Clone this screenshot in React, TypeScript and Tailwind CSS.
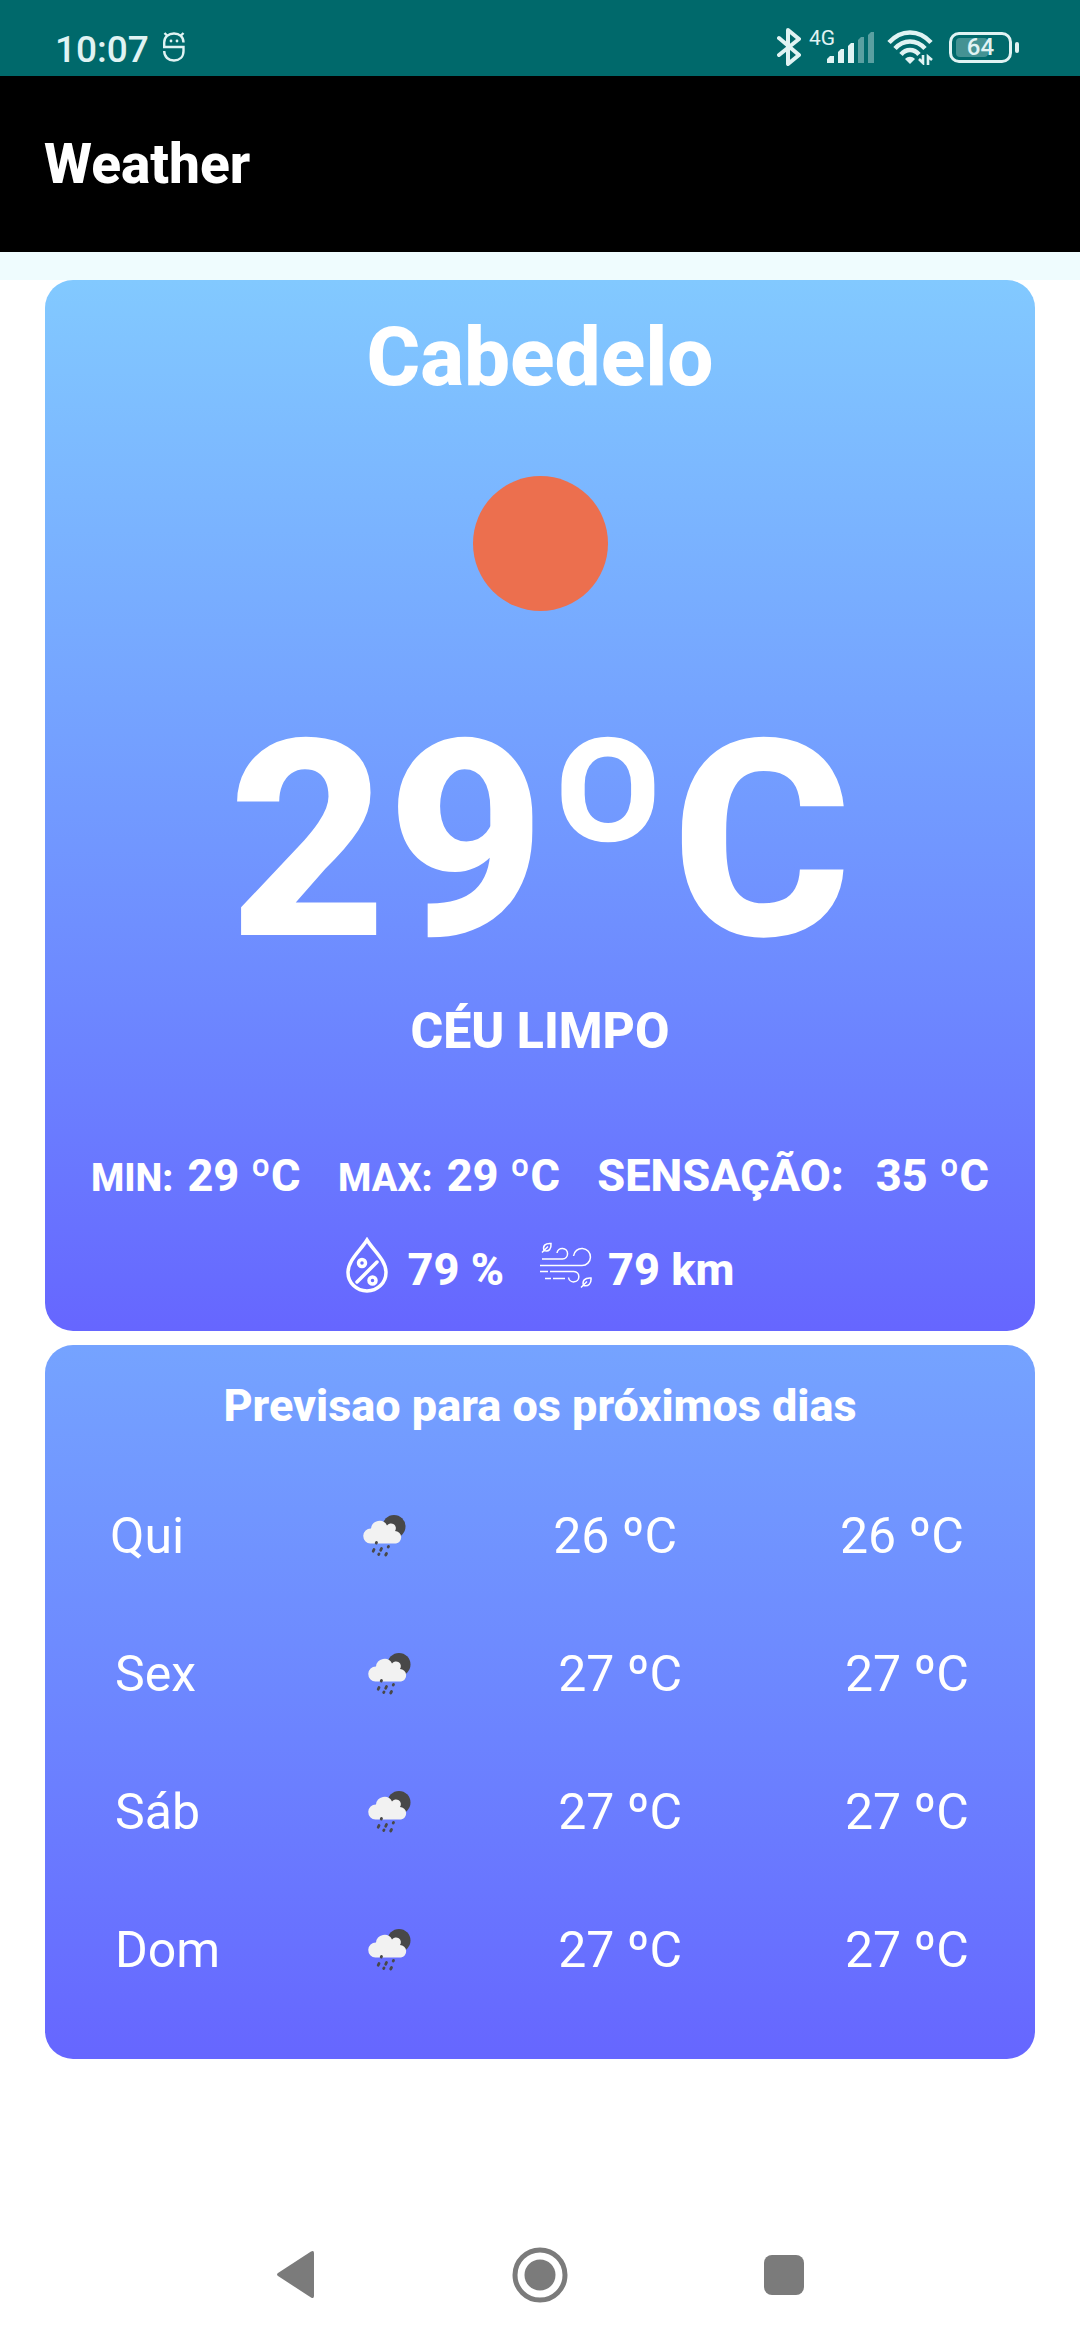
import React from "react";

const NAV = "#7b7b7b";
const STATUS = "#e0f3f3";

function MascotIcon() {
  return (
    <svg viewBox="0 0 22 30" className="h-[30px] w-[22px]" fill="none" stroke={STATUS} strokeWidth="2.400" aria-hidden="true">
      <path d="M4.500 4 1.500 1M17.500 4 20.500 1" />
      <path d="M20.500 10.500C20.500 5 16.500 1.500 11 1.500S1.200 5 1.200 10.500v4.500H20.500V19c0 6-4 9.500-9.500 9.500S1.200 25 1.200 19" />
      <circle cx="8" cy="9" r="1.400" fill={STATUS} stroke="none" />
      <circle cx="14" cy="9" r="1.400" fill={STATUS} stroke="none" />
    </svg>
  );
}

function BluetoothIcon() {
  return (
    <svg viewBox="0 0 24 38" className="h-[38px] w-6" fill="none" stroke={STATUS} strokeWidth="4" strokeLinejoin="round" strokeLinecap="round" aria-hidden="true">
      <path d="M2 10 22 27 11 36V2l11 9L2 27" />
    </svg>
  );
}

function SignalIcon() {
  return (
    <svg viewBox="0 0 48 31" className="h-[31px] w-12" fill={STATUS} aria-hidden="true">
      <path d="M0 31v-4l3-3h4v7z" />
      <path d="M11 31V20l3-3h3v14z" />
      <path d="M21 31V14l3-3h3v20z" />
      <path d="M31 31V8l3-3h3v26z" opacity=".4" />
      <path d="M41 31V3l3-3h3v31z" opacity=".4" />
    </svg>
  );
}

function WifiIcon() {
  return (
    <svg viewBox="0 0 46 35" className="h-[35px] w-[46px]" aria-hidden="true">
      <g fill="none" stroke={STATUS} strokeWidth="4.500">
        <path d="M2 12.500C14-1 32-1 44 12.500" />
        <path d="M8 18.500C16.500 9 29.500 9 38 18.500" />
        <path d="M14 24.500c5-6 13-6 18 0" />
      </g>
      <path d="M23 34l-5-5c3-3 7-3 10 0z" fill={STATUS} />
      <path d="M36 25v8l-4-4M41 35v-8.500l4 3.500" fill="none" stroke={STATUS} strokeWidth="2.600" />
    </svg>
  );
}

function Battery() {
  return (
    <div className="flex items-center gap-[3px]">
      <div className="relative flex h-[31px] w-[63px] items-center justify-center rounded-[10px] border-[3px] border-[#e0f3f3]">
        <span className="absolute inset-y-[3px] left-[4px] w-8 rounded-[4px] bg-[#e0f3f3]/30" />
        <span className="relative text-[24px] leading-none font-medium text-[#e0f3f3]">64</span>
      </div>
      <span className="h-[11px] w-1 rounded-full bg-[#e0f3f3]" />
    </div>
  );
}

function DropIcon() {
  return (
    <svg viewBox="0 0 42 56" className="h-14 w-[42px]" fill="none" stroke="white" strokeWidth="3.500" role="img" aria-label="Umidade">
      <path d="M21 3C15 13 2 23 2 35.500a19 18.500 0 0 0 38 0C40 23 27 13 21 3z" />
      <path d="M11 45 31 25" strokeLinecap="round" />
      <circle cx="16" cy="26" r="3.500" />
      <circle cx="26.500" cy="43.500" r="3.500" />
    </svg>
  );
}

function WindIcon() {
  return (
    <svg viewBox="0 -5 52 56" className="h-14 w-[52px]" fill="none" stroke="white" strokeWidth="1.500" role="img" aria-label="Vento">
      <path d="M2 17h20.500a5.300 5.300 0 1 0-5.500-6" />
      <path d="M0 23.500h42a8.500 8.500 0 1 0-8.500-9.500" />
      <path d="M0 29.500h8M10 29.500h24a5.200 5.200 0 1 1-5.500 6" />
      <path d="M5 36.500h6M13 36.500h12" />
      <path d="M2 10.500 8 4.500M4 8.500C2.500 4 5 1 11 1.500 11.500 7 9 10 4 8.500z" />
      <path d="M41 45.500l6-6M43.500 43.500c-1.500-4.500 1-8 7.500-7.500 .5 5-2.500 9-7.500 7.500z" />
    </svg>
  );
}

function RainIcon() {
  return (
    <svg viewBox="0 0 44 44" className="h-11 w-11" role="img" aria-label="Chuva">
      <circle cx="32" cy="12.500" r="11.500" fill="#484848" />
      <path d="M8.500 29.500A7.500 7.500 0 0 1 9 14.500a8.500 8.500 0 0 1 16-3 4.500 4.500 0 0 1 8 5.500 6.300 6.300 0 0 1 1 12.500z" fill="#f2f2f2" />
      <g stroke="#484848" strokeWidth="2.800" strokeLinecap="round">
        <path d="M14.500 28.500l-.3 .6M12 35.500l-.8 1.800M19.500 34.500l-.8 1.800M26.500 32.500l-.3.500M17 40l-.3.500M24.500 39.500l-.8 1.500" />
      </g>
    </svg>
  );
}

function Reading({ label, value }: { label: string; value: string }) {
  return (
    <div className="flex items-baseline gap-3.5">
      <dt className="text-[38px]">{label}</dt>
      <dd className="text-[45px]">{value}</dd>
    </div>
  );
}

const forecast = [
  { day: "Qui", max: "26 ºC", min: "26 ºC" },
  { day: "Sex", max: "27 ºC", min: "27 ºC" },
  { day: "Sáb", max: "27 ºC", min: "27 ºC" },
  { day: "Dom", max: "27 ºC", min: "27 ºC" },
];

export default function App() {
  return (
    <div className="flex min-h-screen flex-col bg-white font-['Roboto',sans-serif] text-white">
      <div className="flex h-19 items-end justify-between bg-[#00696b] pr-[61px] pb-[10px] pl-[55px] text-[#e0f3f3]">
        <div className="flex items-end gap-3.5">
          <span className="text-[37px] leading-8 font-medium">10:07</span>
          <span className="mb-1"><MascotIcon /></span>
        </div>
        <div className="flex items-center">
          <BluetoothIcon />
          <span className="ml-2 self-start text-[21px] leading-5">4G</span>
          <span className="-ml-2"><SignalIcon /></span>
          <span className="ml-3"><WifiIcon /></span>
          <span className="ml-4"><Battery /></span>
        </div>
      </div>

      <header className="flex h-44 items-center bg-black px-11">
        <h1 className="text-[55px] font-extrabold">Weather</h1>
      </header>
      <div className="h-7 bg-[#effcfe]" />

      <main className="flex flex-col gap-[14px] px-[45px]">
        <section className="flex flex-col items-center rounded-[28px] bg-linear-to-b from-[#82c9ff] to-[#6666ff] py-7 font-extrabold">
          <h2 className="text-[82px] leading-[98px]">Cabedelo</h2>
          <div className="mt-[70px] size-[135px] rounded-full bg-[#ec6f4e]" role="img" aria-label="Sol" />
          <p className="mt-[70px] text-[275px] leading-80">29ºC</p>
          <p className="text-[50px] leading-15">CÉU LIMPO</p>
          <dl className="mt-[85px] flex w-full justify-between px-[46px] leading-15">
            <Reading label="MIN:" value="29 ºC" />
            <Reading label="MAX:" value="29 ºC" />
            <div className="flex gap-8 text-[45px]">
              <dt>SENSAÇÃO:</dt>
              <dd>35 ºC</dd>
            </div>
          </dl>
          <div className="mt-[29px] flex gap-9 text-[45px] leading-[66px]">
            <span className="flex items-start gap-5"><DropIcon />79 %</span>
            <span className="flex items-start gap-4"><WindIcon />79 km</span>
          </div>
        </section>

        <section className="rounded-[28px] bg-linear-to-b from-[#75a3ff] to-[#6666ff] pt-8 pb-10">
          <h2 className="text-center text-[45px] leading-[58px] font-extrabold">Previsao para os próximos dias</h2>
          <div className="mt-8 pr-14 pl-[65px]">
            <table className="w-full table-fixed text-[50px] leading-15">
              <tbody>
                {forecast.map((f) => (
                  <tr key={f.day} className="h-[138px] text-left not-first:*:pl-[5px]">
                    <th scope="row" className="w-[29%] font-normal">{f.day}</th>
                    <td className="w-[22%]"><RainIcon /></td>
                    <td className="w-[33%]">{f.max}</td>
                    <td>{f.min}</td>
                  </tr>
                ))}
              </tbody>
            </table>
          </div>
        </section>
      </main>

      <nav className="mt-auto flex h-[130px] items-center justify-center gap-[196px]">
        <button aria-label="Voltar">
          <svg viewBox="0 0 40 50" className="h-[50px] w-10" fill={NAV}>
            <path d="M2 23 35 1.500Q38 0 38 3v43q0 3-3 1.500L2 26q-2-1.500 0-3z" />
          </svg>
        </button>
        <button aria-label="Início">
          <svg viewBox="0 0 56 56" className="size-14">
            <circle cx="28" cy="28" r="25" fill="none" stroke={NAV} strokeWidth="5" />
            <circle cx="28" cy="28" r="15.500" fill={NAV} />
          </svg>
        </button>
        <button aria-label="Recentes" className="size-10 rounded-lg bg-[#7b7b7b]" />
      </nav>
    </div>
  );
}
